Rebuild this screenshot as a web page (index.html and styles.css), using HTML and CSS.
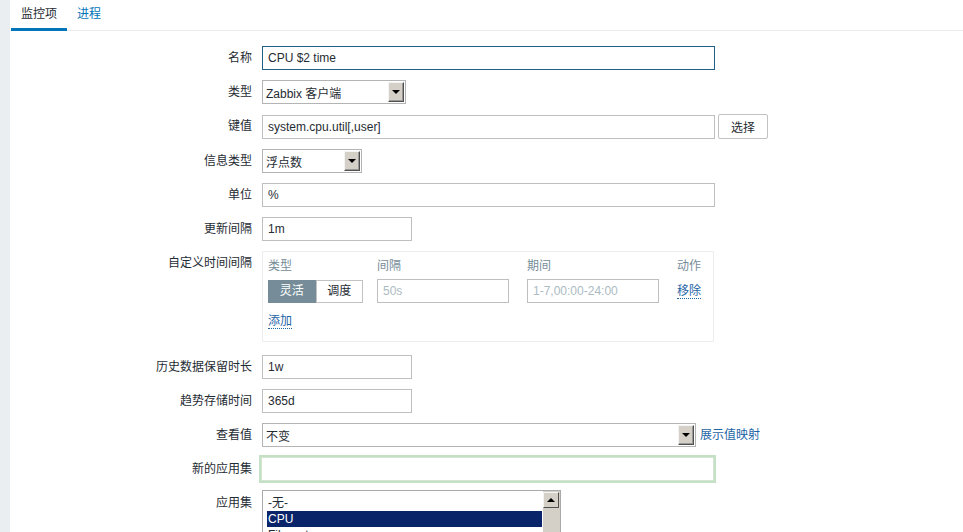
FILE: index.html
```html
<!DOCTYPE html>
<html lang="zh-CN">
<head>
    <meta charset="UTF-8">
    <title>监控项</title>
    <link rel="stylesheet" href="styles.css">
</head>
<body>
    <div class="page">
        <div class="tabs">
            <a class="tab active">监控项</a>
            <a class="tab">进程</a>
        </div>
        <form class="form">
            <label class="lbl">名称</label>
            <div class="field"><input type="text" class="inp wide focused" value="CPU $2 time"></div>

            <label class="lbl">类型</label>
            <div class="field">
                <div class="sel" style="width: 144px"><span class="sel-text">Zabbix 客户端</span><span class="sel-btn"></span></div>
            </div>

            <label class="lbl">键值</label>
            <div class="field">
                <input type="text" class="inp wide" value="system.cpu.util[,user]">
                <button type="button" class="btn">选择</button>
            </div>

            <label class="lbl">信息类型</label>
            <div class="field">
                <div class="sel" style="width: 100px"><span class="sel-text">浮点数</span><span class="sel-btn"></span></div>
            </div>

            <label class="lbl">单位</label>
            <div class="field"><input type="text" class="inp wide" value="%"></div>

            <label class="lbl">更新间隔</label>
            <div class="field"><input type="text" class="inp short" value="1m"></div>

            <label class="lbl">自定义时间间隔</label>
            <div class="field">
                <div class="intervals">
                    <div class="iv-grid">
                        <span class="iv-head">类型</span>
                        <span class="iv-head">间隔</span>
                        <span class="iv-head">期间</span>
                        <span class="iv-head">动作</span>
                        <div class="seg">
                            <span class="seg-item on">灵活</span>
                            <span class="seg-item">调度</span>
                        </div>
                        <input type="text" class="inp iv-inp" placeholder="50s">
                        <input type="text" class="inp iv-inp" placeholder="1-7,00:00-24:00">
                        <a class="link">移除</a>
                    </div>
                    <a class="link add">添加</a>
                </div>
            </div>

            <label class="lbl">历史数据保留时长</label>
            <div class="field"><input type="text" class="inp short" value="1w"></div>

            <label class="lbl">趋势存储时间</label>
            <div class="field"><input type="text" class="inp short" value="365d"></div>

            <label class="lbl">查看值</label>
            <div class="field">
                <div class="sel" style="width: 434px"><span class="sel-text">不变</span><span class="sel-btn"></span></div>
                <a class="link plain">展示值映射</a>
            </div>

            <label class="lbl">新的应用集</label>
            <div class="field"><input type="text" class="inp wide glow"></div>

            <label class="lbl">应用集</label>
            <div class="field">
                <div class="listbox">
                    <div class="opts">
                        <div class="opt">-无-</div>
                        <div class="opt picked">CPU</div>
                        <div class="opt">Filesystems</div>
                    </div>
                    <div class="scroll"><span class="scroll-up"></span></div>
                </div>
            </div>
        </form>
    </div>
</body>
</html>
```

FILE: styles.css
```css
html, body {
    margin: 0;
    padding: 0;
    height: 100%;
    overflow: hidden;
}
body {
    background: #ebeef0;
    font-family: Arial, "Liberation Sans", "Noto Sans CJK SC", sans-serif;
    font-size: 12px;
    color: #1f2c33;
}
.page {
    margin-left: 10px;
    background: #fff;
    min-height: 100%;
}
.tabs {
    display: flex;
    height: 30px;
    border-bottom: 1px solid #ebeef0;
    padding-left: 1px;
}
.tab {
    padding: 0 10px;
    line-height: 29px;
    color: #0275b8;
    cursor: pointer;
}
.tab.active {
    color: #1f2c33;
    border-bottom: 3px solid #0275b8;
    height: 28px;
}
.form {
    display: grid;
    grid-template-columns: 242px 1fr;
    column-gap: 10px;
    row-gap: 10px;
    padding-top: 15px;
}
.lbl {
    text-align: right;
    line-height: 24px;
    white-space: nowrap;
}
.field {
    display: flex;
    align-items: center;
    gap: 3px;
    min-height: 24px;
}
.inp {
    box-sizing: border-box;
    height: 24px;
    border: 1px solid #bfbfbf;
    padding: 0 5px;
    font-family: inherit;
    font-size: 12px;
    color: #1f2c33;
    outline: none;
    background: #fff;
}
.inp::placeholder {
    color: #acbbc2;
}
.wide {
    width: 453px;
}
.short {
    width: 150px;
}
.focused {
    border-color: #1f5f8a;
}
.glow {
    height: 24px;
    border: 1px solid #d3e4d3;
    box-shadow: 0 0 0 2px #c5e1c5;
    margin: 0 0 0 -1px;
}
.btn {
    height: 25px;
    padding: 0 12px;
    background: #fff;
    border: 1px solid #c2c2c2;
    border-radius: 2px;
    font-family: inherit;
    font-size: 12px;
    color: #1f2c33;
}
.sel {
    box-sizing: border-box;
    height: 24px;
    border: 1px solid #b4b4b4;
    background: #fff;
    position: relative;
    display: flex;
    align-items: center;
}
.sel-text {
    padding-left: 3px;
}
.sel-btn {
    position: absolute;
    right: 1px;
    top: 1px;
    width: 14px;
    height: 18px;
    background: #d4d0c8;
    border: 1px solid;
    border-color: #f4f4f4 #505050 #505050 #f4f4f4;
    box-shadow: inset -1px -1px 0 #9a9a9a;
}
.sel-btn::after {
    content: "";
    position: absolute;
    left: 3px;
    top: 7px;
    border-left: 4px solid transparent;
    border-right: 4px solid transparent;
    border-top: 4px solid #000;
}
.intervals {
    box-sizing: border-box;
    width: 452px;
    border: 1px solid #ebeef0;
    padding: 6px 5px 12px;
    margin-bottom: 3px;
}
.iv-grid {
    display: grid;
    grid-template-columns: 109px 150px 150px auto;
    row-gap: 5px;
    align-items: center;
}
.iv-head {
    color: #768d99;
    line-height: 16px;
}
.seg {
    display: flex;
    width: 95px;
}
.seg-item {
    box-sizing: border-box;
    width: 48px;
    height: 23px;
    line-height: 21px;
    text-align: center;
    border: 1px solid #c2c2c2;
    color: #1f2c33;
}
.seg-item.on {
    background: #768d99;
    border-color: #768d99;
    color: #fff;
}
.iv-inp {
    width: 132px;
}
.link {
    color: #1f65a6;
    border-bottom: 1px dotted #1f65a6;
    align-self: center;
    justify-self: start;
    cursor: pointer;
    line-height: 14px;
}
.link.add {
    display: inline-block;
    margin-top: 11px;
}
.link.plain {
    border-bottom: none;
    margin-left: 1px;
}
.listbox {
    box-sizing: border-box;
    width: 299px;
    height: 90px;
    border: 1px solid #a9a9a9;
    display: flex;
    background: #fff;
    margin-top: -1px;
}
.opts {
    flex: 1;
    padding: 4px 1px 0 4px;
}
.opt {
    line-height: 16px;
    padding-left: 1px;
}
.opt.picked {
    background: #0a246a;
    color: #fff;
}
.scroll {
    width: 17px;
    background: #d4d0c8;
    position: relative;
}
.scroll-up {
    position: absolute;
    top: 1px;
    left: 0;
    box-sizing: border-box;
    width: 16px;
    height: 16px;
    background: #d4d0c8;
    border: 1px solid;
    border-color: #f4f4f4 #505050 #505050 #f4f4f4;
}
.scroll-up::after {
    content: "";
    position: absolute;
    left: 3px;
    top: 5px;
    border-left: 4px solid transparent;
    border-right: 4px solid transparent;
    border-bottom: 4px solid #000;
}
```
